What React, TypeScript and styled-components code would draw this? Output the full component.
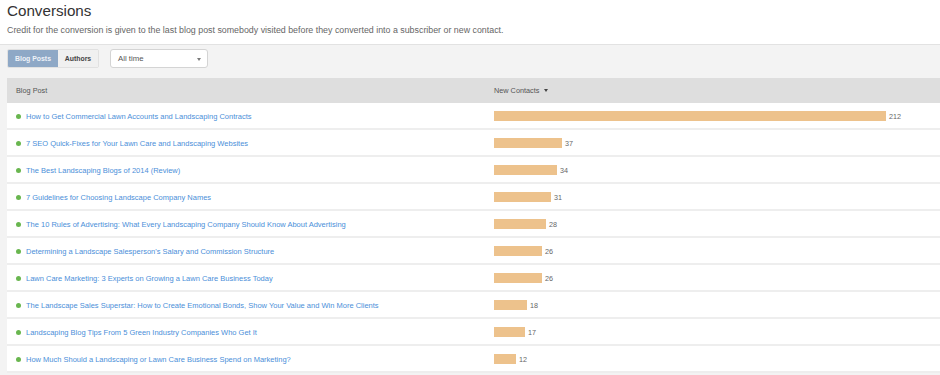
import React from 'react';
import styled, { createGlobalStyle } from 'styled-components';

interface PostRow {
  title: string,
  contacts: number,
}

const posts: PostRow[] = [
  { title: 'How to Get Commercial Lawn Accounts and Landscaping Contracts', contacts: 212 },
  { title: '7 SEO Quick-Fixes for Your Lawn Care and Landscaping Websites', contacts: 37 },
  { title: 'The Best Landscaping Blogs of 2014 (Review)', contacts: 34 },
  { title: '7 Guidelines for Choosing Landscape Company Names', contacts: 31 },
  { title: 'The 10 Rules of Advertising: What Every Landscaping Company Should Know About Advertising', contacts: 28 },
  { title: 'Determining a Landscape Salesperson\'s Salary and Commission Structure', contacts: 26 },
  { title: 'Lawn Care Marketing: 3 Experts on Growing a Lawn Care Business Today', contacts: 26 },
  { title: 'The Landscape Sales Superstar: How to Create Emotional Bonds, Show Your Value and Win More Clients', contacts: 18 },
  { title: 'Landscaping Blog Tips From 5 Green Industry Companies Who Get It', contacts: 17 },
  { title: 'How Much Should a Landscaping or Lawn Care Business Spend on Marketing?', contacts: 12 },
];

// widest bar in px, for the top post
const MAX_BAR = 392;

const App = (): JSX.Element => {
  const max = Math.max(...posts.map((p) => p.contacts));

  return (
    <>
      <GlobalStyle />
      <Page>
        <Intro>
          <Title>Conversions</Title>
          <Subtitle>
            Credit for the conversion is given to the last blog post somebody visited before they converted into a subscriber or new contact.
          </Subtitle>
        </Intro>

        <Panel>
          <Toolbar>
            <ButtonGroup>
              <Tab active>Blog Posts</Tab>
              <Tab>Authors</Tab>
            </ButtonGroup>
            <Select>
              <span>All time</span>
              <Caret />
            </Select>
          </Toolbar>

          <Table>
            <HeadRow>
              <HeadCell>Blog Post</HeadCell>
              <HeadCell>
                New Contacts <SortArrow />
              </HeadCell>
            </HeadRow>

            {posts.map((post) => (
              <Row key={post.title}>
                <Cell>
                  <Dot />
                  <PostLink href="#">{post.title}</PostLink>
                </Cell>
                <Cell>
                  <Bar style={{ width: `${Math.round((post.contacts / max) * MAX_BAR)}px` }} />
                  <Count>{post.contacts}</Count>
                </Cell>
              </Row>
            ))}
          </Table>
        </Panel>
      </Page>
    </>
  );
};

export default App;

const GlobalStyle = createGlobalStyle`
  html, body {
    margin: 0;
    padding: 0;
    background: #ffffff;
    font-family: "Liberation Sans", Arial, Helvetica, sans-serif;
    overflow: hidden;
  }
`;

const Page = styled.div`
  width: 940px;
  height: 375px;
  display: flex;
  flex-direction: column;
  background: #f3f3f3;
`;

const Intro = styled.div`
  background: #ffffff;
  padding: 1px 7px 0;
  height: 43px;
  border-bottom: 1px solid #e2e2e2;
`;

const Title = styled.h1`
  margin: 0;
  font-size: 15.2px;
  line-height: 20px;
  font-weight: normal;
  color: #333333;
`;

const Subtitle = styled.p`
  margin: 3px 0 0;
  font-size: 8.85px;
  line-height: 12px;
  color: #666666;
`;

const Panel = styled.div`
  flex: 1;
  padding: 4px 0 0 7px;
  display: flex;
  flex-direction: column;
`;

const Toolbar = styled.div`
  display: flex;
  align-items: center;
  gap: 11px;
  height: 19px;
  margin-bottom: 10px;
`;

const ButtonGroup = styled.div`
  display: flex;
  height: 19px;
  border-radius: 2px;
  overflow: hidden;
  border: 1px solid #e1e1e1;
  box-sizing: border-box;
`;

const Tab = styled.button<{ active?: boolean }>`
  border: none;
  margin: 0;
  padding: 0;
  width: ${({ active }) => (active ? '50px' : '40px')};
  font-family: inherit;
  font-size: 6.9px;
  font-weight: bold;
  color: ${({ active }) => (active ? '#eef2f8' : '#444444')};
  background: ${({ active }) => (active ? '#8ea8c6' : '#f0f0f0')};
`;

const Select = styled.div`
  width: 98px;
  height: 19px;
  box-sizing: border-box;
  border: 1px solid #d4d4d4;
  border-radius: 3px;
  background: #ffffff;
  display: flex;
  align-items: center;
  justify-content: space-between;
  padding: 0 6px 0 7px;
  font-size: 7.8px;
  color: #555555;
`;

const Caret = styled.span`
  width: 0;
  height: 0;
  border-left: 2.5px solid transparent;
  border-right: 2.5px solid transparent;
  border-top: 3px solid #7a7a7a;
  margin-top: 1px;
`;

const Table = styled.div`
  display: flex;
  flex-direction: column;
  background: #ffffff;
`;

const HeadRow = styled.div`
  display: grid;
  grid-template-columns: 478px 1fr;
  height: 25px;
  align-items: center;
  background: #dedede;
`;

const HeadCell = styled.div`
  padding-left: 9px;
  font-size: 7.3px;
  color: #555555;
  display: flex;
  align-items: center;
  gap: 5px;
`;

const SortArrow = styled.span`
  width: 0;
  height: 0;
  border-left: 2.5px solid transparent;
  border-right: 2.5px solid transparent;
  border-top: 3.5px solid #444444;
`;

const Row = styled.div`
  display: grid;
  grid-template-columns: 478px 1fr;
  height: 25px;
  align-items: center;
  border-bottom: 2px solid #eeeeee;
`;

const Cell = styled.div`
  padding-left: 9px;
  display: flex;
  align-items: center;
  padding-top: 1px;
`;

const Dot = styled.span`
  width: 5px;
  height: 5px;
  border-radius: 50%;
  background: #69b64f;
  margin-right: 5px;
  flex-shrink: 0;
`;

const PostLink = styled.a`
  font-size: 7.5px;
  color: #4b8fd9;
  text-decoration: none;
  white-space: nowrap;
`;

const Bar = styled.span`
  height: 10px;
  background: #edc28c;
  flex-shrink: 0;
`;

const Count = styled.span`
  margin-left: 3px;
  font-size: 7.2px;
  color: #666666;
`;
